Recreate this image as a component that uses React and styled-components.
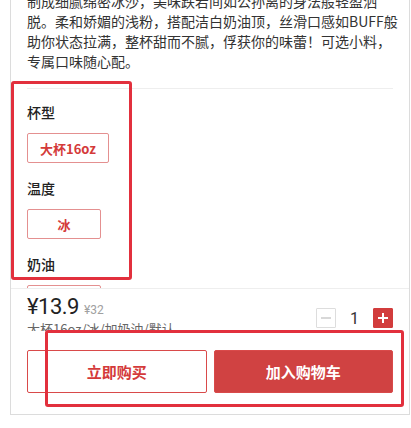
import React from "react";
import styled, { createGlobalStyle } from "styled-components";

const Global = createGlobalStyle`
  html, body { margin: 0; padding: 0; background: #fff; }
  body { font-family: "Noto Sans CJK SC", "Noto Sans", sans-serif; }
  * { box-sizing: border-box; }
`;

const Page = styled.div`
  position: relative;
  width: 411px;
  height: 428px;
  overflow: hidden;
  background: #fff;
`;

const Card = styled.div`
  margin-left: 10px;
  width: 400px;
  height: 415px;
  border: 1px solid #dcdcdc;
  border-top: none;
  display: flex;
  flex-direction: column;
  background: #fff;
`;

const Scroll = styled.div`
  flex: 1;
  overflow: hidden;
  padding: 0 16px;
`;

const Desc = styled.p`
  margin: -9px 0 0;
  font-size: 14px;
  line-height: 20px;
  color: #333;
  white-space: nowrap;
`;

const Divider = styled.div`
  height: 1px;
  background: #eeeeee;
  margin-top: 17px;
`;

const SectionLabel = styled.div`
  margin-top: ${(p) => (p.$first ? 13 : 15)}px;
  font-size: 14px;
  line-height: 20px;
  font-weight: 500;
  color: #222;
`;

const Option = styled.div`
  margin-top: 11px;
  display: inline-flex;
  align-items: center;
  justify-content: center;
  height: 30px;
  min-width: 74px;
  padding: 0 12px;
  border: 1px solid #e49090;
  border-radius: 2px;
  color: #d43a3a;
  font-size: 13px;
  font-weight: 700;
`;

const OptionRow = styled.div`
  display: flex;
`;

const Panel = styled.div`
  border-top: 1px solid #eeeeee;
  padding: 5px 16px 21px;
  background: #fff;
`;

const TopRow = styled.div`
  display: flex;
  justify-content: space-between;
  align-items: flex-start;
`;

const PriceCol = styled.div`
  display: flex;
  flex-direction: column;
`;

const PriceLine = styled.div`
  height: 26px;
  line-height: 26px;
  display: flex;
  align-items: baseline;
`;

const Price = styled.span`
  font-family: Roboto, "Noto Sans", sans-serif;
  font-size: 22px;
  color: #222;
  letter-spacing: -0.5px;
`;

const OldPrice = styled.span`
  margin-left: 5px;
  font-family: Roboto, "Noto Sans", sans-serif;
  font-size: 12px;
  color: #a0a0a0;
`;

const Spec = styled.div`
  height: 11px;
  overflow: hidden;
  font-size: 13px;
  line-height: 18px;
  color: #666;
  white-space: nowrap;
`;

const Stepper = styled.div`
  margin-top: 14px;
  display: flex;
  align-items: center;
`;

const StepBtn = styled.div`
  width: 20px;
  height: 20px;
  display: flex;
  align-items: center;
  justify-content: center;
  border: 1px solid ${(p) => (p.$active ? "#d23c3c" : "#dddddd")};
  background: ${(p) => (p.$active ? "#d23c3c" : "#fff")};
  border-radius: 1px;
`;

const Qty = styled.span`
  width: 37px;
  text-align: center;
  font-family: Roboto, "Noto Sans", sans-serif;
  font-size: 16px;
  color: #333;
`;

const Buttons = styled.div`
  margin-top: 19px;
  display: flex;
  gap: 7px;
`;

const ActionBtn = styled.div`
  flex: 1;
  height: 43px;
  display: flex;
  align-items: center;
  justify-content: center;
  border: 1px solid #d94a4a;
  border-radius: 2px;
  background: ${(p) => (p.$filled ? "#d04242" : "#fff")};
  color: ${(p) => (p.$filled ? "#fff" : "#d43a3a")};
  font-size: 15px;
  font-weight: 700;
`;

const Highlight = styled.div`
  position: absolute;
  left: ${(p) => p.$x}px;
  top: ${(p) => p.$y}px;
  width: ${(p) => p.$w}px;
  height: ${(p) => p.$h}px;
  border: 3.5px solid #e2303d;
  border-radius: 3px;
  pointer-events: none;
`;

export default function App() {
  return (
    <Page>
      <Global />
      <Card>
        <Scroll>
          <Desc>
            制成细腻绵密冰沙，美味跌宕间如公孙离的身法般轻盈洒
            <br />
            脱。柔和娇媚的浅粉，搭配洁白奶油顶，丝滑口感如BUFF般
            <br />
            助你状态拉满，整杯甜而不腻，俘获你的味蕾！可选小料，
            <br />
            专属口味随心配。
          </Desc>
          <Divider />
          <SectionLabel $first>杯型</SectionLabel>
          <OptionRow>
            <Option>大杯16oz</Option>
          </OptionRow>
          <SectionLabel>温度</SectionLabel>
          <OptionRow>
            <Option>冰</Option>
          </OptionRow>
          <SectionLabel>奶油</SectionLabel>
          <OptionRow>
            <Option>加奶油</Option>
          </OptionRow>
        </Scroll>
        <Panel>
          <TopRow>
            <PriceCol>
              <PriceLine>
                <Price>¥13.9</Price>
                <OldPrice>¥32</OldPrice>
              </PriceLine>
              <Spec>大杯16oz/冰/加奶油/默认</Spec>
            </PriceCol>
            <Stepper>
              <StepBtn>
                <svg width="12" height="12" viewBox="0 0 12 12">
                  <path d="M1 6h10" stroke="#c8c8c8" strokeWidth="1.4" />
                </svg>
              </StepBtn>
              <Qty>1</Qty>
              <StepBtn $active>
                <svg width="12" height="12" viewBox="0 0 12 12">
                  <path d="M1 6h10M6 1v10" stroke="#fff" strokeWidth="2" />
                </svg>
              </StepBtn>
            </Stepper>
          </TopRow>
          <Buttons>
            <ActionBtn>立即购买</ActionBtn>
            <ActionBtn $filled>加入购物车</ActionBtn>
          </Buttons>
        </Panel>
      </Card>
      <Highlight $x={11} $y={81} $w={121} $h={199} />
      <Highlight $x={45} $y={330} $w={359} $h={77} />
    </Page>
  );
}
